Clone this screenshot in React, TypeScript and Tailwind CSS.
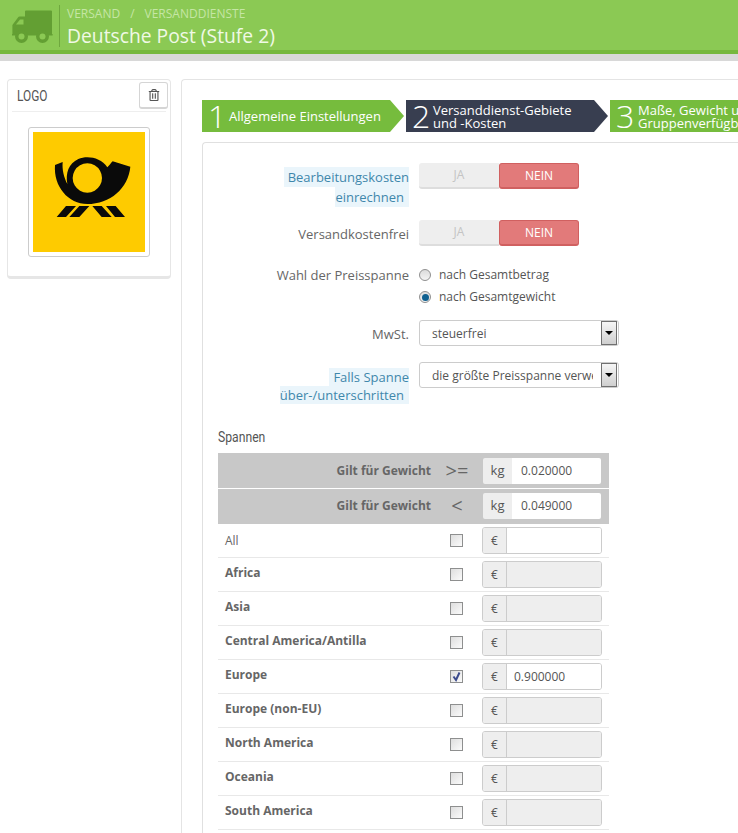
import React from "react";
import { FaRegTrashAlt } from "react-icons/fa";

const Truck = () => (
  <svg width="42" height="34" viewBox="0 0 42 34" className="shrink-0">
    <path fill="#639f33" d="M14 1.5a1 1 0 0 1 1-1h25a1 1 0 0 1 1 1V24h.6v1.6H1v-1.6h.4v-9L7 7.5a2 2 0 0 1 1.6-1H14z" />
    <path fill="#8bc954" d="M5 14.5 9 9.5h3.5v5z" />
    <circle cx="10.5" cy="26.5" r="6.5" fill="#639f33" />
    <circle cx="10.5" cy="26.5" r="3" fill="#8bc954" />
    <circle cx="31.5" cy="26.5" r="6.5" fill="#639f33" />
    <circle cx="31.5" cy="26.5" r="3" fill="#8bc954" />
  </svg>
);

const Logo = () => (
  <svg width="112" height="120" viewBox="99 36 336 360" className="block">
    <rect x="99" y="36" width="336" height="360" fill="#fecb00" />
    <path
      fillRule="evenodd"
      fill="#0a0a0a"
      d="M165 135 L188 126 C186 150 192 172 202 192 C196 160 206 130 235 117 C262 106 302 112 322 142 C328 136 333 129 338 124 L391 140 C385 205 330 252 262 252 C205 252 160 200 165 135 Z M262 130 a44 44 0 1 0 0.01 0 Z"
    />
    <path fill="#0a0a0a" d="M198 258H228L198 291H170Z M238 258H268L238 291H208Z M277 258H305L335 291H305Z M318 258H347L375 291H345Z" />
  </svg>
);

const Toggle = () => (
  <div className="flex h-[26px] w-[160px] text-[12px]">
    <div className="flex w-[80px] items-center justify-center rounded-l-[3px] bg-[#eeeeee] border-b-2 border-[#dddddd] text-[#c4c4c4]">JA</div>
    <div className="flex w-[80px] items-center justify-center rounded-[3px] bg-[#e27a7a] border border-b-2 border-[#d06060] text-white">NEIN</div>
  </div>
);

const Hint = ({ first, last, tight }: { first: string; last: string; tight?: boolean }) => (
  <div className={`flex w-[207px] flex-col items-end pr-px text-[13px] text-[#3f87ab] ${tight ? "leading-[18px]" : "leading-[20px]"}`}>
    <span className="bg-[#eaf5fb] pl-[4px]">{first}</span>
    <span className="bg-[#eaf5fb] pr-[5px]">{last}</span>
  </div>
);

const Radio = ({ on }: { on?: boolean }) => (
  <span className="flex h-[12px] w-[12px] items-center justify-center rounded-full border border-[#8f8f8f] bg-gradient-to-b from-[#dcdcdc] to-[#f4f4f4]">
    {on && <span className="h-[7px] w-[7px] rounded-full bg-[#0e5f8f]" />}
  </span>
);

const Select = ({ text }: { text: string }) => (
  <div className="flex h-[26px] w-[200px] items-center rounded-[3px] border border-[#cccccc] bg-white pl-[12px] pr-px text-[12px] text-[#555555]">
    <span className="w-[161px] overflow-hidden whitespace-nowrap pt-[2px]">{text}</span>
    <span className="ml-auto flex h-[24px] w-[16px] items-center justify-center border border-[#707070] bg-gradient-to-b from-[#f6f6f6] to-[#cfcfcf]">
      <span className="h-0 w-0 border-x-[4px] border-t-[4px] border-x-transparent border-t-black" />
    </span>
  </div>
);

const Check = ({ on }: { on?: boolean }) => (
  <span className="relative block h-[13px] w-[13px] border border-[#8e8f8f] bg-gradient-to-br from-[#dedede] to-[#fbfbfb]">
    {on && (
      <svg width="11" height="11" viewBox="0 0 11 11" className="absolute left-0 top-0">
        <path d="M2.5 5.5 5 9 8.5 1.5" fill="none" stroke="#3b4a8c" strokeWidth="2" />
      </svg>
    )}
  </span>
);

const HeadRow = ({ op, value, gap }: { op: string; value: string; gap?: boolean }) => (
  <div className={`flex h-[35px] items-center bg-[#c8c8c8] ${gap ? "mb-px" : "pb-[2px]"}`}>
    <span className="w-[213px] text-right text-[12px] font-bold text-[#666666]">Gilt für Gewicht</span>
    <span className="w-[52px] text-center text-[20px] leading-none text-[#666666]">{op}</span>
    <div className="flex h-[26px] w-[118px] text-[13px] text-[#555555]">
      <span className="flex w-[29px] items-center justify-center rounded-l-[2px] bg-[#eeeeee]">kg</span>
      <span className="flex flex-1 items-center rounded-r-[2px] bg-white pl-[9px] text-[12px]">{value}</span>
    </div>
  </div>
);

const Row = ({ name, bold = true, value, on }: { name: string; bold?: boolean; value?: string; on?: boolean }) => {
  const open = !bold || on;
  return (
    <div className="flex h-[34px] border-b border-[#e8e8e8] pl-[7px]">
      <span className={`w-[225px] text-[12px] text-[#666666] ${bold ? "pt-[7px] leading-[16px] font-bold" : "pt-[9px] leading-[16px]"}`}>{name}</span>
      <span className="flex w-[32px] pt-[10px]"><Check on={on} /></span>
      <div className="mt-[3px] flex h-[27px] w-[120px] overflow-hidden rounded-[3px] border border-[#cccccc] text-[12px] text-[#555555]">
        <span className="flex w-[24px] items-center justify-center border-r border-[#cccccc] bg-[#eeeeee]">€</span>
        <span className={`flex flex-1 items-center pl-[7px] ${open ? "bg-white" : "bg-[#eeeeee]"}`}>{value}</span>
      </div>
    </div>
  );
};

const Step = ({ n, children, dark, open }: { n: string; children: React.ReactNode; dark?: boolean; open?: boolean }) => (
  <div
    className={`flex h-[32px] w-[202px] shrink-0 items-center pl-[6px] text-white ${dark ? "bg-[#383e50]" : "bg-[#76bc3d]"} ${
      open ? "" : "[clip-path:polygon(0_0,188px_0,202px_50%,188px_100%,0_100%)]"
    }`}
  >
    <span className="w-[21px] text-[32px] font-light leading-none">{n}</span>
    {children}
  </div>
);

export default function App() {
  return (
    <div className="h-[833px] w-[738px] overflow-hidden bg-white font-['Open_Sans',sans-serif] text-[#666666]">
      <header className="h-[61px] border-b-[7px] border-[#d8d8d8]">
        <div className="flex h-[54px] items-start border-b-4 border-[#76b83e] bg-[#8bc954] pl-[11px]">
          <div className="mt-[10px]"><Truck /></div>
          <div className="ml-[6px] mt-[5px] h-[42px] border-l border-[#6fa83e] pl-[7px]">
            <div className="mt-[1px] flex text-[12px] leading-[16px] text-[#c5e6a5]">
              <span>VERSAND</span>
              <span className="mx-[10px]">/</span>
              <span>VERSANDDIENSTE</span>
            </div>
            <div className="mt-[1px] text-[19.3px] leading-[26px] text-[#f0f9e6]">Deutsche Post (Stufe 2)</div>
          </div>
        </div>
      </header>

      <div className="flex items-start pl-[7px] pt-[18px]">
        <aside className="h-[200px] w-[164px] shrink-0 rounded-[4px] border border-[#e6e6e6] border-b-[3px] px-[4px]">
          <div className="flex h-[32px] items-start justify-between border-b border-[#eeeeee] pl-[5px]">
            <span className="inline-block origin-left scale-x-[0.85] pt-[7px] font-['Roboto',sans-serif] text-[14px] leading-[18px] text-[#555555]">LOGO</span>
            <button className="-mr-[2px] mt-[2px] flex h-[27px] w-[29px] items-center justify-center rounded-[3px] border border-[#d5d5d5] border-b-2 bg-white text-[#555555]">
              <FaRegTrashAlt size={12} />
            </button>
          </div>
          <div className="ml-[16px] mt-[15px] w-[122px] rounded-[3px] border border-[#cccccc] p-[4px]">
            <Logo />
          </div>
        </aside>

        <main className="ml-[10px] min-h-[780px] flex-1 rounded-tl-[4px] border-l border-t border-[#e4e4e4] pl-[20px] pt-[20px]">
          <div className="flex w-[700px] gap-[2px]">
            <Step n="1"><span className="pt-px text-[13px]">Allgemeine Einstellungen</span></Step>
            <Step n="2" dark><span className="pt-px text-[13px] leading-[13px]">Versanddienst-Gebiete<br />und -Kosten</span></Step>
            <Step n="3" open><span className="ml-px whitespace-nowrap pt-px text-[13px] leading-[13px]">Maße, Gewicht und<br />Gruppenverfügbarkeit</span></Step>
          </div>

          <section className="mt-[10px] w-[700px] rounded-tl-[4px] border-l border-t border-[#e0e0e0] pb-[20px] pt-[20px]">
            <div className="flex items-start gap-[9px]">
              <div className="pt-[4px]"><Hint first="Bearbeitungskosten" last="einrechnen" /></div>
              <Toggle />
            </div>
            <div className="mt-[13px] flex items-center gap-[10px]">
              <div className="w-[206px] pt-[3px] text-right text-[13px]">Versandkostenfrei</div>
              <Toggle />
            </div>
            <div className="mt-[19px] flex items-start gap-[10px]">
              <div className="w-[206px] text-right text-[13px] leading-[20px]">Wahl der Preisspanne</div>
              <div className="flex flex-col gap-[2px] text-[12px] leading-[20px] text-[#555555]">
                <label className="flex items-center gap-[8px]"><Radio /><span>nach Gesamtbetrag</span></label>
                <label className="flex items-center gap-[8px]"><Radio on /><span>nach Gesamtgewicht</span></label>
              </div>
            </div>
            <div className="mt-[13px] flex items-center gap-[10px]">
              <div className="w-[206px] pt-[3px] text-right text-[13px]">MwSt.</div>
              <Select text="steuerfrei" />
            </div>
            <div className="mt-[16px] flex items-start gap-[9px]">
              <div className="pt-[6px]"><Hint first="Falls Spanne" last="über-/unterschritten" tight /></div>
              <Select text="die größte Preisspanne verwenden" />
            </div>

            <div className="ml-[15px] mt-[24px] w-[391px]">
              <div className="h-[25px] font-['Roboto',sans-serif] text-[14px] leading-[18px] text-[#555555]">
                <span className="inline-block origin-left scale-x-[0.87]">Spannen</span>
              </div>
              <HeadRow op=">=" value="0.020000" gap />
              <HeadRow op="<" value="0.049000" />
              <Row name="All" bold={false} />
              <Row name="Africa" />
              <Row name="Asia" />
              <Row name="Central America/Antilla" />
              <Row name="Europe" on value="0.900000" />
              <Row name="Europe (non-EU)" />
              <Row name="North America" />
              <Row name="Oceania" />
              <Row name="South America" />
            </div>
          </section>
        </main>
      </div>
    </div>
  );
}
